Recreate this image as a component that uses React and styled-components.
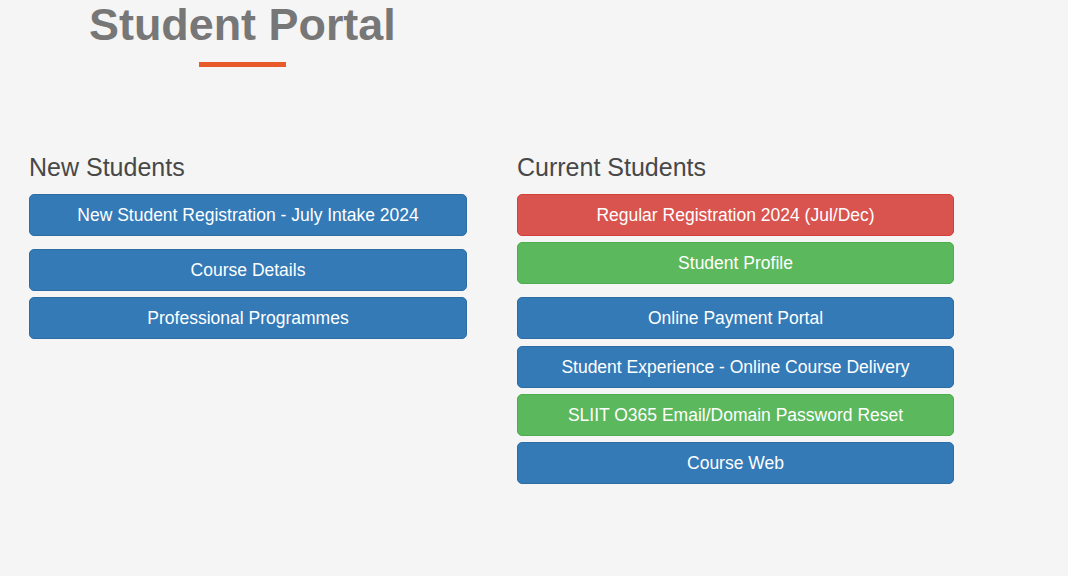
import React from "react";
import styled, { createGlobalStyle } from "styled-components";

const Global = createGlobalStyle`
  html, body { margin: 0; padding: 0; background: #f5f5f5; }
  body { font-family: "Liberation Sans", Arial, sans-serif; }
`;

const Page = styled.div`
  width: 1068px;
  min-height: 576px;
  background: #f5f5f5;
`;

const Header = styled.header`
  display: flex;
  padding-left: 89px;
`;

const TitleBlock = styled.div`
  display: flex;
  flex-direction: column;
  align-items: center;
`;

const Title = styled.h1`
  margin: 0;
  font-size: 44.9px;
  line-height: 50px;
  font-weight: 700;
  color: #777777;
`;

const Underline = styled.div`
  width: 87px;
  height: 5px;
  margin-top: 12px;
  background: #e85a27;
`;

const Columns = styled.main`
  display: grid;
  grid-template-columns: 438px 437px;
  column-gap: 50px;
  padding-left: 29px;
  margin-top: 85px;
`;

const Column = styled.section`
  display: flex;
  flex-direction: column;
`;

const Heading = styled.h3`
  margin: 0 0 12px 0;
  font-size: 25px;
  line-height: 30px;
  font-weight: 400;
  color: #484848;
`;

const palette = {
  primary: { bg: "#337ab7", border: "#2e6da4" },
  danger: { bg: "#d9534f", border: "#d43f3a" },
  success: { bg: "#5cb85c", border: "#4cae4c" },
};

const Button = styled.a`
  display: flex;
  align-items: center;
  justify-content: center;
  box-sizing: border-box;
  height: 42px;
  margin-top: ${(p) => p.$gap}px;
  border-radius: 5px;
  border: 1px solid ${(p) => palette[p.$kind].border};
  background: ${(p) => palette[p.$kind].bg};
  color: #ffffff;
  font-size: 17.5px;
  text-decoration: none;
  cursor: pointer;
`;

const newStudents = [
  { label: "New Student Registration - July Intake 2024", kind: "primary", gap: 0 },
  { label: "Course Details", kind: "primary", gap: 13 },
  { label: "Professional Programmes", kind: "primary", gap: 6 },
];

const currentStudents = [
  { label: "Regular Registration 2024 (Jul/Dec)", kind: "danger", gap: 0 },
  { label: "Student Profile", kind: "success", gap: 6 },
  { label: "Online Payment Portal", kind: "primary", gap: 13 },
  { label: "Student Experience - Online Course Delivery", kind: "primary", gap: 7 },
  { label: "SLIIT O365 Email/Domain Password Reset", kind: "success", gap: 6 },
  { label: "Course Web", kind: "primary", gap: 6 },
];

export default function App() {
  return (
    <Page>
      <Global />
      <Header>
        <TitleBlock>
          <Title>Student Portal</Title>
          <Underline />
        </TitleBlock>
      </Header>
      <Columns>
        <Column>
          <Heading>New Students</Heading>
          {newStudents.map((b) => (
            <Button key={b.label} $kind={b.kind} $gap={b.gap}>
              {b.label}
            </Button>
          ))}
        </Column>
        <Column>
          <Heading>Current Students</Heading>
          {currentStudents.map((b) => (
            <Button key={b.label} $kind={b.kind} $gap={b.gap}>
              {b.label}
            </Button>
          ))}
        </Column>
      </Columns>
    </Page>
  );
}
